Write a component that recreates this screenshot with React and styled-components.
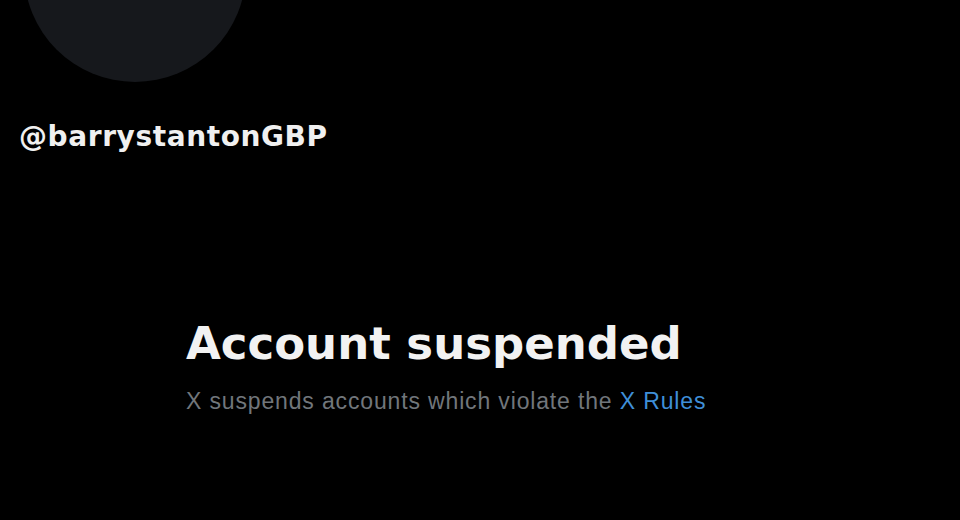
import React from "react";
import styled, { createGlobalStyle } from "styled-components";

const GlobalStyle = createGlobalStyle`
  html, body {
    margin: 0;
    padding: 0;
    background: #000;
  }
  body {
    font-family: "Liberation Sans", Arial, sans-serif;
    color: #e7e9ea;
  }
`;

const Page = styled.div`
  width: 960px;
  height: 520px;
  overflow: hidden;
  background: #000;
  display: flex;
  flex-direction: column;
`;

const Header = styled.div`
  display: flex;
  flex-direction: column;
  padding-left: 19px;
`;

const Avatar = styled.div`
  width: 222px;
  height: 222px;
  border-radius: 50%;
  background: #16181c;
  margin-top: -140px;
  margin-left: 5px;
`;

const Handle = styled.div`
  margin-top: 38px;
  font-family: "DejaVu Sans", "Liberation Sans", sans-serif;
  font-size: 28px;
  font-weight: 700;
  line-height: 34px;
  letter-spacing: 0.6px;
  color: #f0f0f0;
`;

const Notice = styled.div`
  display: flex;
  flex-direction: column;
  padding-left: 186px;
  margin-top: 164px;
`;

const Title = styled.h1`
  margin: 0;
  font-family: "DejaVu Sans", "Liberation Sans", sans-serif;
  font-size: 45px;
  line-height: 52px;
  font-weight: 700;
  color: #f2f2f2;
`;

const Sub = styled.p`
  margin: 17px 0 0;
  font-size: 23px;
  line-height: 28px;
  letter-spacing: 0.85px;
  color: #71767b;
`;

const Link = styled.a`
  color: #3f8fd8;
  text-decoration: none;
`;

export default function App() {
  return (
    <Page>
      <GlobalStyle />
      <Header>
        <Avatar />
        <Handle>@barrystantonGBP</Handle>
      </Header>
      <Notice>
        <Title>Account suspended</Title>
        <Sub>
          X suspends accounts which violate the <Link href="#">X Rules</Link>
        </Sub>
      </Notice>
    </Page>
  );
}
